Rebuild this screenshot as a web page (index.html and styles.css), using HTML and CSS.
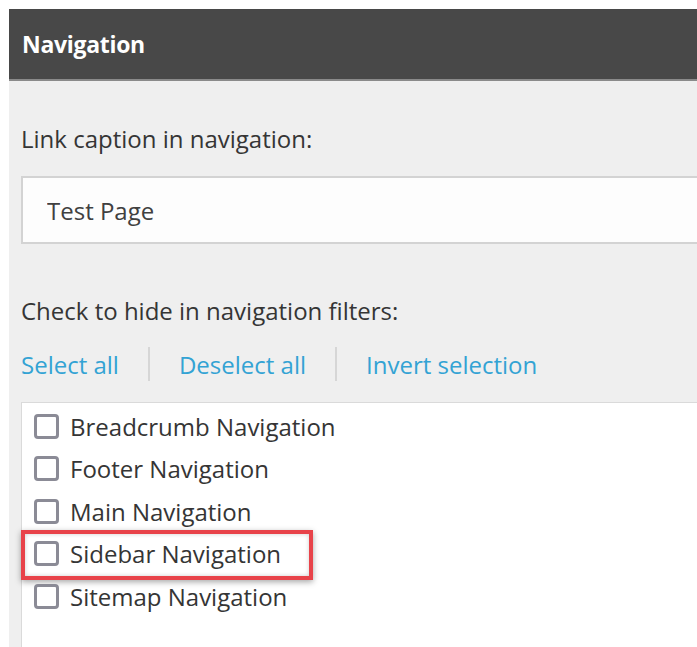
FILE: index.html
```html
<!DOCTYPE html>
<html lang="en">
<head>
<meta charset="utf-8">
<title>Navigation</title>
<link rel="stylesheet" href="styles.css">
</head>
<body>
<section class="panel">
  <header class="panel-header">Navigation</header>
  <div class="panel-body">
    <label class="field-label" for="caption">Link caption in navigation:</label>
    <div class="text-box"><input id="caption" class="text-input" type="text" value="Test Page"></div>

    <div class="field-label second">Check to hide in navigation filters:</div>
    <nav class="bulk-actions">
      <a href="#" class="action">Select all</a>
      <span class="sep"></span>
      <a href="#" class="action">Deselect all</a>
      <span class="sep"></span>
      <a href="#" class="action">Invert selection</a>
    </nav>

    <ul class="check-list">
      <li class="check-row"><span class="box"></span><span class="check-text">Breadcrumb Navigation</span></li>
      <li class="check-row"><span class="box"></span><span class="check-text">Footer Navigation</span></li>
      <li class="check-row"><span class="box"></span><span class="check-text">Main Navigation</span></li>
      <li class="check-row highlighted"><span class="box"></span><span class="check-text">Sidebar Navigation</span></li>
      <li class="check-row"><span class="box"></span><span class="check-text">Sitemap Navigation</span></li>
    </ul>
  </div>
</section>
</body>
</html>
```

FILE: styles.css
```css
html, body {
  height: 100%;
}

body {
  margin: 0;
  padding: 9px 0 0 9px;
  box-sizing: border-box;
  background: #ffffff;
  font-family: "Open Sans", "Liberation Sans", sans-serif;
  color: #353535;
  overflow: hidden;
}

.panel {
  height: 100%;
  background: #efefef;
}

.panel-header {
  height: 72px;
  box-sizing: border-box;
  padding-left: 13px;
  display: flex;
  align-items: center;
  background: #484848;
  border-bottom: 2px solid #8a8a8a;
  color: #ffffff;
  font-weight: 700;
  font-size: 23px;
  letter-spacing: -0.3px;
}

.panel-body {
  padding: 42px 0 0 12px;
}

.field-label {
  display: block;
  font-size: 24px;
  line-height: 32px;
  color: #353535;
}

.field-label.second {
  margin-top: 51px;
}

.text-box {
  margin-top: 21px;
  height: 68px;
  box-sizing: border-box;
  border: 2px solid #d3d3d3;
  border-right: none;
  background: #fdfdfd;
  display: flex;
  align-items: center;
}

.text-input {
  border: none;
  outline: none;
  background: transparent;
  padding: 0 0 0 24px;
  width: 100%;
  font-family: inherit;
  font-size: 24px;
  color: #404040;
}

.bulk-actions {
  display: flex;
  align-items: center;
  margin-top: 17px;
  height: 40px;
}

.action {
  color: #33a3d4;
  text-decoration: none;
  font-size: 24px;
}

.sep {
  width: 2px;
  height: 34px;
  background: #d6d6d6;
  margin: 0 29px;
}

.check-list {
  list-style: none;
  margin: 18px 0 0;
  padding: 2px 0 0 12px;
  background: #ffffff;
  border-top: 1px solid #dadada;
  border-left: 1px solid #dadada;
  height: 400px;
}

.check-row {
  position: relative;
  display: flex;
  align-items: center;
  height: 42.5px;
}

.box {
  width: 25px;
  height: 25px;
  box-sizing: border-box;
  border: 3px solid #8b8b96;
  border-radius: 4px;
  background: #ffffff;
  margin-right: 11px;
  flex: none;
}

.check-text {
  font-size: 24px;
  color: #353535;
}

/* red callout drawn over the highlighted row */
.highlighted::after {
  content: "";
  position: absolute;
  left: -13px;
  top: -3px;
  width: 292px;
  height: 50px;
  box-sizing: border-box;
  border: 4px solid #e8434a;
  box-shadow: 0 2px 6px rgba(0, 0, 0, 0.35), inset 0 0 4px rgba(0, 0, 0, 0.2);
  pointer-events: none;
}
```
